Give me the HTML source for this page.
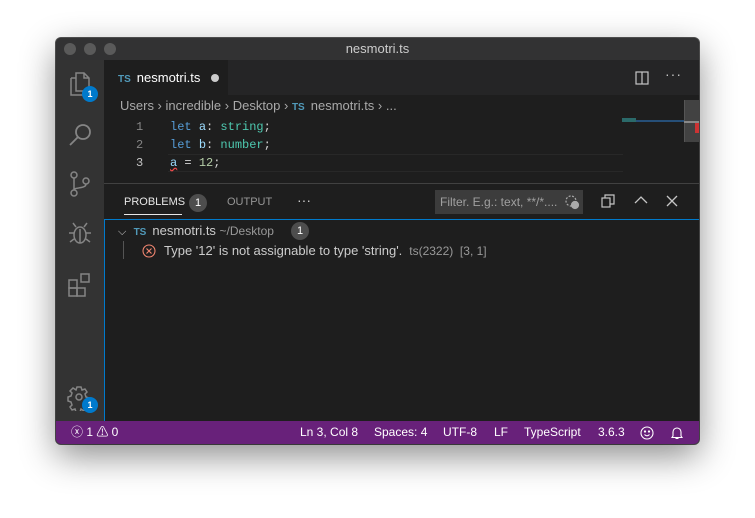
<!DOCTYPE html>
<html><head><style>
*{margin:0;padding:0;box-sizing:border-box}
body{width:755px;height:518px;background:#fff;font-family:"Liberation Sans",sans-serif;position:relative;overflow:hidden}
.win{position:absolute;left:56px;top:38px;width:643px;height:406px;background:#1e1e1e;border-radius:5px;overflow:hidden;box-shadow:0 12px 35px rgba(0,0,0,.45),0 0 0 1px #555}
.title{position:absolute;left:0;top:0;width:100%;height:22px;background:#323233;color:#ccc;font-size:13px;text-align:center;line-height:22px}
.dot{position:absolute;top:5px;width:12px;height:12px;border-radius:50%;background:#5a5a5a}
.act{position:absolute;left:0;top:22px;width:48px;height:361px;background:#333}
.abs{position:absolute;color:#858585}
.badge{position:absolute;width:16px;height:16px;border-radius:50%;background:#007acc;color:#fff;font-size:9px;text-align:center;line-height:16px;font-weight:bold}
.tabs{position:absolute;left:48px;top:22px;right:0;height:35px;background:#252526}
.tab{position:absolute;left:0;top:0;width:124px;height:35px;background:#1e1e1e;color:#fff;font-size:13px;line-height:35px;padding-left:14px}
.ts{color:#519aba;font-size:10px;font-weight:bold;margin-right:6px}
.bc{position:absolute;left:64px;top:59px;color:#a9a9a9;font-size:13px;line-height:18px}
.code{position:absolute;top:80px;font-family:"Liberation Mono",monospace;font-size:12px;line-height:18px}
.panel{position:absolute;left:48px;top:145px;right:0;height:238px;background:#1e1e1e;border-top:1px solid #414141}
.ph{font-size:11px;color:#969696;position:absolute;top:12px}
.st{position:absolute;left:0;top:383px;width:100%;height:23px;background:#68217a;color:#fff;font-size:12px;line-height:23px}
.st span{position:absolute}
</style></head><body>
<div class="win">
<div class="title">nesmotri.ts</div>
<div class="dot" style="left:8px"></div><div class="dot" style="left:28px"></div><div class="dot" style="left:48px"></div>
<div class="act">
<svg class="abs" style="left:12px;top:12px" width="24" height="26" fill="none" stroke="#858585" stroke-width="1.5"><path d="M8 1h8l5 5v13H8z M3 6h5 M3 6v17h12v-4"/><path d="M16 1v5h5"/></svg>
<div class="badge" style="left:26px;top:26px">1</div>
<svg class="abs" style="left:12px;top:62px" width="26" height="26" fill="none" stroke="#858585" stroke-width="1.8"><circle cx="15" cy="10" r="7"/><path d="M10 15L2 23"/></svg>
<svg class="abs" style="left:12px;top:110px" width="24" height="28" fill="none" stroke="#858585" stroke-width="1.5"><circle cx="6" cy="5" r="3"/><circle cx="6" cy="23" r="3"/><circle cx="18" cy="11" r="3"/><path d="M6 8v12 M18 14c0 5-12 3-12 6"/></svg>
<svg class="abs" style="left:11px;top:160px" width="26" height="26" fill="none" stroke="#858585" stroke-width="1.5"><ellipse cx="13" cy="15" rx="6" ry="8"/><path d="M9 7l-3-4 M17 7l3-4 M7 13H2 M19 13h5 M7 19l-4 3 M19 19l4 3 M13 9v14"/></svg>
<svg class="abs" style="left:11px;top:212px" width="26" height="26" fill="none" stroke="#858585" stroke-width="1.5"><rect x="2" y="8" width="8" height="8"/><rect x="2" y="16" width="8" height="8"/><rect x="10" y="16" width="8" height="8"/><rect x="14" y="2" width="8" height="8"/></svg>
<svg class="abs" style="left:11px;top:325px" width="26" height="26" fill="none" stroke="#858585" stroke-width="1.5"><circle cx="12" cy="12" r="3"/><path d="M10 2h4l1 3 3-1 2 3-2 2 1 3 3 1v4l-3 1-1 3 2 2-3 3-3-2-1 3h-4l-1-3-3 1-2-3 2-2-1-3-3-1v-4l3-1 1-3-2-2 3-3 3 2z"/></svg>
<div class="badge" style="left:26px;top:337px">1</div>
</div>
<div class="tabs">
<div class="tab"><span class="ts">TS</span>nesmotri.ts <span style="display:inline-block;width:8px;height:8px;border-radius:50%;background:#ccc;margin-left:7px"></span></div>
<svg style="position:absolute;left:531px;top:11px" width="14" height="14" fill="none" stroke="#c5c5c5" stroke-width="1.2"><rect x="1" y="1" width="12" height="12"/><path d="M7 1v12"/></svg>
<span style="position:absolute;left:561px;top:6px;color:#c5c5c5;font-size:14px;letter-spacing:1px">···</span>
</div>
<div class="bc">Users › incredible › Desktop › <span class="ts">TS</span>nesmotri.ts › ...</div>
<div class="code" style="left:80px;color:#858585;width:10px">1<br>2<br><span style="color:#c6c6c6">3</span></div>
<div style="position:absolute;left:112px;top:116px;width:455px;height:18px;border-top:1px solid #282828;border-bottom:1px solid #282828"></div>
<div class="code" style="left:114px;color:#d4d4d4"><span style="color:#569cd6">let</span> <span style="color:#9cdcfe">a</span>: <span style="color:#4ec9b0">string</span>;<br><span style="color:#569cd6">let</span> <span style="color:#9cdcfe">b</span>: <span style="color:#4ec9b0">number</span>;<br><span style="color:#9cdcfe;text-decoration:underline wavy #f14c4c">a</span> = <span style="color:#b5cea8">12</span>;</div>
<div style="position:absolute;left:566px;top:82px;width:64px;height:2px;background:#264f78"></div>
<div style="position:absolute;left:566px;top:80px;width:14px;height:4px;background:#2b6a6a"></div>
<div style="position:absolute;left:628px;top:62px;width:15px;height:42px;background:#424242;border-left:1px solid #555"></div>
<div style="position:absolute;left:628px;top:83px;width:15px;height:2px;background:#888"></div>
<div style="position:absolute;left:639px;top:85px;width:4px;height:10px;background:#c33"></div>
<div class="panel">
<span class="ph" style="left:20px;color:#e7e7e7">PROBLEMS</span>
<div class="badge" style="left:85px;top:10px;background:#4d4d4d;width:18px;height:18px;line-height:18px;font-size:11px;font-weight:normal">1</div>
<div style="position:absolute;left:20px;top:30px;width:58px;height:1px;background:#e7e7e7"></div>
<span class="ph" style="left:123px">OUTPUT</span>
<span class="ph" style="left:193px;color:#ccc;font-size:14px;top:8px">···</span>
<div style="position:absolute;left:331px;top:6px;width:148px;height:24px;background:#3c3c3c;color:#a0a0a0;font-size:12px;line-height:24px;padding-left:5px">Filter. E.g.: text, **/*....</div>
<svg style="position:absolute;left:460px;top:10px" width="16" height="16" fill="none" stroke="#aaa" stroke-width="1.2"><circle cx="7" cy="7" r="5" stroke-dasharray="2 1.5"/><circle cx="11" cy="11" r="3.5" fill="#aaa"/></svg>
<svg style="position:absolute;left:497px;top:10px" width="14" height="14" fill="none" stroke="#c5c5c5" stroke-width="1.2"><rect x="1" y="4" width="8" height="9"/><path d="M4 4V1h9v9h-4"/></svg>
<svg style="position:absolute;left:530px;top:11px" width="14" height="10" fill="none" stroke="#c5c5c5" stroke-width="1.3"><path d="M1 8l6-6 6 6"/></svg>
<svg style="position:absolute;left:562px;top:11px" width="12" height="12" fill="none" stroke="#c5c5c5" stroke-width="1.3"><path d="M1 1l10 10M11 1L1 11"/></svg>
<div style="position:absolute;left:0;top:35px;right:0;bottom:0;border-top:1px solid #007acc;border-left:1px solid #007acc"></div>
<div style="position:absolute;left:14px;top:38px;color:#ccc;font-size:13px;line-height:18px"><span style="font-size:11px">⌵</span>&nbsp; <span class="ts">TS</span>nesmotri.ts <span style="color:#999;font-size:12px">~/Desktop</span></div>
<div class="badge" style="left:187px;top:38px;background:#4d4d4d;width:18px;height:18px;line-height:18px;font-size:11px;font-weight:normal">1</div>
<div style="position:absolute;left:19px;top:57px;width:1px;height:18px;background:#555"></div>
<svg style="position:absolute;left:38px;top:60px" width="14" height="14" fill="none" stroke="#f48771" stroke-width="1.1"><circle cx="7" cy="7" r="6"/><path d="M4.5 4.5l5 5M9.5 4.5l-5 5"/></svg>
<div style="position:absolute;left:60px;top:58px;color:#ccc;font-size:13px;line-height:18px">Type '12' is not assignable to type 'string'. <span style="color:#999;font-size:12px">&nbsp;ts(2322)&nbsp; [3, 1]</span></div>
</div>
<div class="st">
<span style="left:15px">ⓧ 1 ⚠ 0</span>
<span style="left:244px">Ln 3, Col 8</span>
<span style="left:318px">Spaces: 4</span>
<span style="left:387px">UTF-8</span>
<span style="left:438px">LF</span>
<span style="left:468px">TypeScript</span>
<span style="left:542px">3.6.3</span>
<svg style="position:absolute;left:584px;top:5px" width="14" height="14" fill="none" stroke="#fff" stroke-width="1.1"><circle cx="7" cy="7" r="6"/><circle cx="5" cy="5.5" r=".6" fill="#fff"/><circle cx="9" cy="5.5" r=".6" fill="#fff"/><path d="M4.5 8.5q2.5 2.5 5 0"/></svg>
<svg style="position:absolute;left:614px;top:5px" width="14" height="14" fill="none" stroke="#fff" stroke-width="1.1"><path d="M3 10V6a4 4 0 0 1 8 0v4l1 1.5H2z M5.5 12.5h3"/></svg>
</div>
</div>
</body></html>
